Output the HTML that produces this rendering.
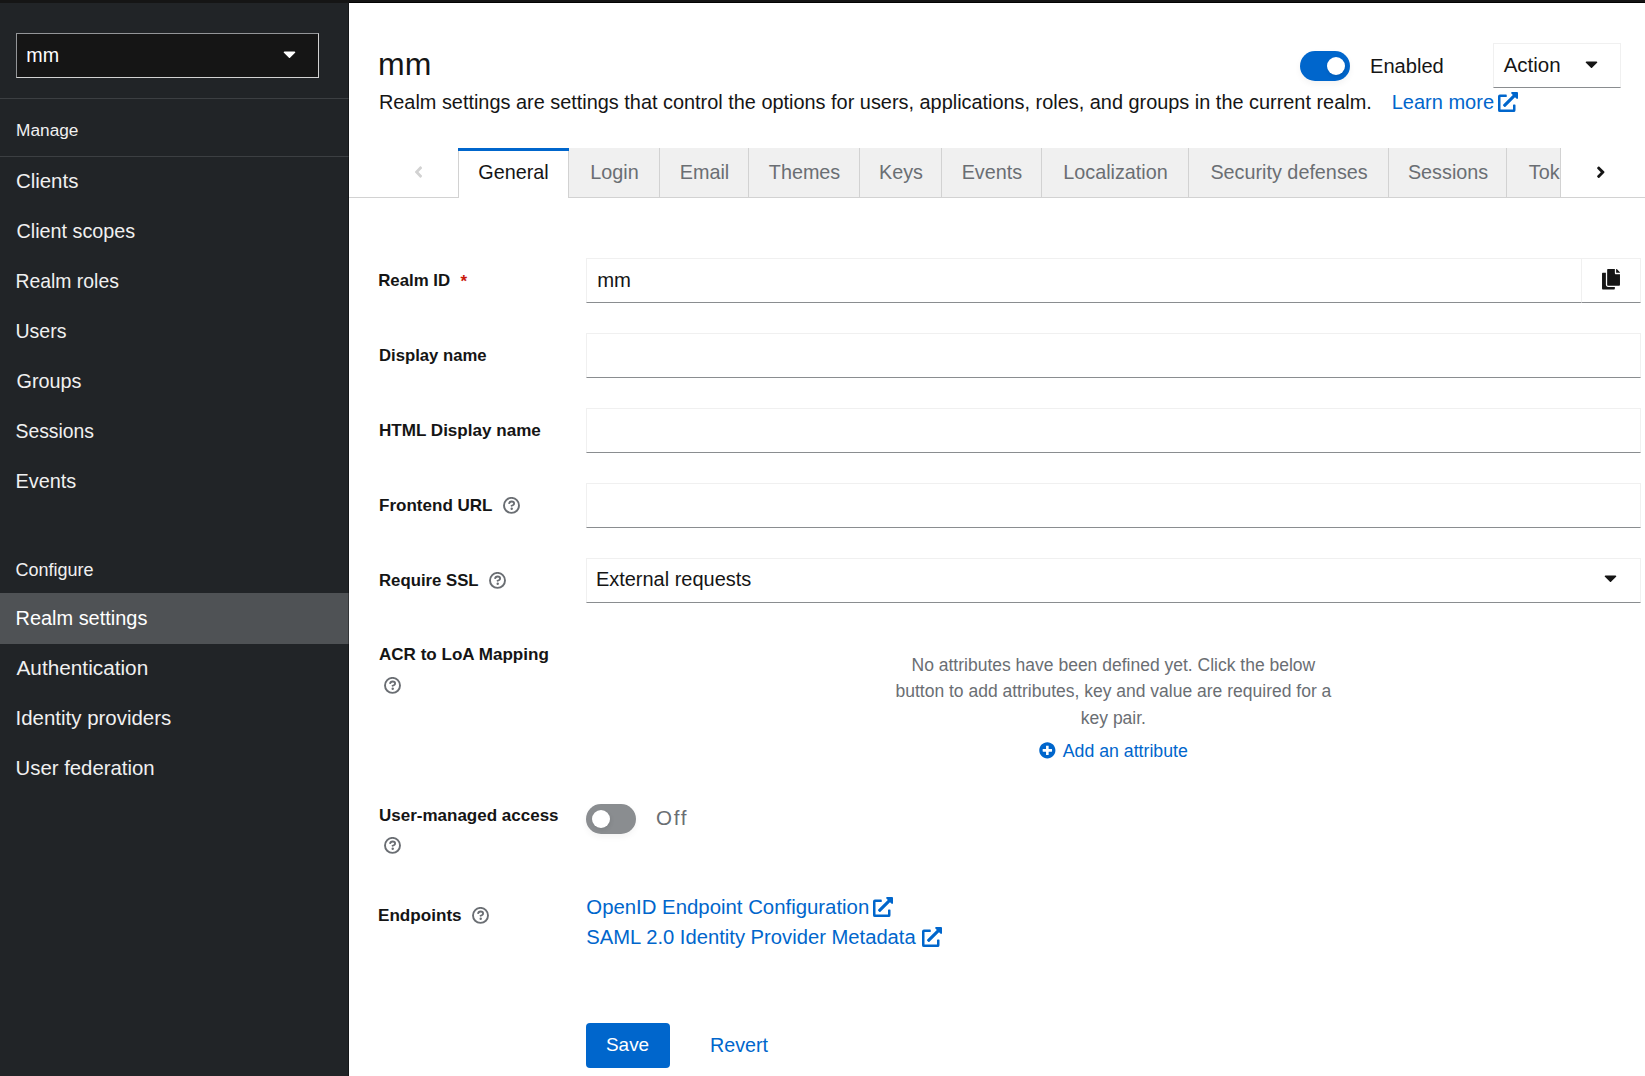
<!DOCTYPE html>
<html><head><meta charset="utf-8"><style>
html,body{margin:0;padding:0;width:1645px;height:1076px;overflow:hidden;background:#fff;}
body{position:relative;font-family:"Liberation Sans",sans-serif;}
.t{position:absolute;white-space:pre;}
.r{position:absolute;}
</style></head><body>
<div class="r" style="left:0px;top:0px;width:349px;height:1076px;background:#212427"></div>
<div class="r" style="left:16px;top:33px;width:303px;height:45px;background:#151515;border:1px solid #d2d2d2;border-top-color:#939598;border-left-color:#939598;box-sizing:border-box"></div>
<div class="t" style="left:26.30px;top:45.52px;font-size:19.7px;line-height:19.7px;color:#fff;font-weight:400;">mm</div>
<svg class="r" style="left:282.5px;top:44px;width:13px;height:20px" viewBox="0 0 320 512" fill="#fff"><path d="M31.3 192h257.3c17.8 0 26.7 21.5 14.1 34.1L174.1 354.8c-7.8 7.8-20.5 7.8-28.3 0L17.2 226.1C4.6 213.5 13.5 192 31.3 192z"/></svg>
<div class="r" style="left:0px;top:98px;width:349px;height:1px;background:#3c3f42"></div>
<div class="t" style="left:16.10px;top:122.49px;font-size:17.26px;line-height:17.26px;color:#f0f0f0;font-weight:400;">Manage</div>
<div class="r" style="left:0px;top:156px;width:349px;height:1px;background:#3c3f42"></div>
<div class="r" style="left:0px;top:593px;width:349px;height:51px;background:#4f5255"></div>
<div class="t" style="left:15.90px;top:170.67px;font-size:20.47px;line-height:20.47px;color:#f0f0f0;font-weight:400;">Clients</div>
<div class="t" style="left:16.50px;top:222.26px;font-size:19.77px;line-height:19.77px;color:#f0f0f0;font-weight:400;">Client scopes</div>
<div class="t" style="left:15.50px;top:271.59px;font-size:19.39px;line-height:19.39px;color:#f0f0f0;font-weight:400;">Realm roles</div>
<div class="t" style="left:15.50px;top:322.49px;font-size:19.5px;line-height:19.5px;color:#f0f0f0;font-weight:400;">Users</div>
<div class="t" style="left:16.50px;top:372.23px;font-size:19.81px;line-height:19.81px;color:#f0f0f0;font-weight:400;">Groups</div>
<div class="t" style="left:15.50px;top:421.61px;font-size:19.36px;line-height:19.36px;color:#f0f0f0;font-weight:400;">Sessions</div>
<div class="t" style="left:15.50px;top:472.18px;font-size:19.87px;line-height:19.87px;color:#f0f0f0;font-weight:400;">Events</div>
<div class="t" style="left:15.40px;top:560.95px;font-size:18.01px;line-height:18.01px;color:#f0f0f0;font-weight:400;">Configure</div>
<div class="t" style="left:15.50px;top:609.12px;font-size:19.94px;line-height:19.94px;color:#fff;font-weight:400;">Realm settings</div>
<div class="t" style="left:16.50px;top:658.40px;font-size:20.79px;line-height:20.79px;color:#f0f0f0;font-weight:400;">Authentication</div>
<div class="t" style="left:15.50px;top:707.69px;font-size:20.45px;line-height:20.45px;color:#f0f0f0;font-weight:400;">Identity providers</div>
<div class="t" style="left:15.50px;top:757.75px;font-size:20.38px;line-height:20.38px;color:#f0f0f0;font-weight:400;">User federation</div>
<div class="r" style="left:348px;top:0px;width:1px;height:1076px;background:rgba(0,0,0,0.35)"></div>
<div class="r" style="left:0px;top:0px;width:1645px;height:3px;background:#151515"></div>
<div class="r" style="left:349px;top:2px;width:1296px;height:1px;background:#030303"></div>
<div class="t" style="left:378.00px;top:47.91px;font-size:32.0px;line-height:32.0px;color:#151515;font-weight:400;">mm</div>
<div class="t" style="left:378.90px;top:93.15px;font-size:19.9px;line-height:19.9px;color:#151515;font-weight:400;">Realm settings are settings that control the options for users, applications, roles, and groups in the current realm.</div>
<div class="t" style="left:1391.70px;top:91.85px;font-size:20.02px;line-height:20.02px;color:#0066cc;font-weight:400;">Learn more</div>
<div class="t" style="left:1370.00px;top:55.97px;font-size:20.12px;line-height:20.12px;color:#151515;font-weight:400;">Enabled</div>
<div class="t" style="left:1503.70px;top:54.66px;font-size:20.49px;line-height:20.49px;color:#151515;font-weight:400;">Action</div>
<svg class="r" style="left:1498px;top:91.8px;width:20px;height:20px" viewBox="0 0 512 512" fill="#0066cc"><path d="M432,320H400a16,16,0,0,0-16,16V448H64V128H208a16,16,0,0,0,16-16V80a16,16,0,0,0-16-16H48A48,48,0,0,0,0,112V464a48,48,0,0,0,48,48H400a48,48,0,0,0,48-48V336A16,16,0,0,0,432,320ZM488,0h-128c-21.37,0-32.05,25.91-17,41l35.73,35.73L135,320.37a24,24,0,0,0,0,34L157.67,377a24,24,0,0,0,34,0L435.28,133.32,471,169c15,15,41,4.5,41-17V24A24,24,0,0,0,488,0Z"/></svg>
<div class="r" style="left:1300px;top:51px;width:50px;height:30px;background:#0066cc;border-radius:15px;box-shadow:0 3px 6px rgba(0,0,0,0.05)"></div>
<div class="r" style="left:1326.8px;top:57px;width:18.0px;height:18px;background:#fff;border-radius:50%;box-shadow:1px 2px 4px rgba(0,0,0,0.12)"></div>
<div class="r" style="left:1493px;top:43px;width:128px;height:45px;border:1px solid #f0f0f0;border-bottom-color:#8a8d90;box-sizing:border-box"></div>
<svg class="r" style="left:1584.6px;top:54px;width:13px;height:20px" viewBox="0 0 320 512" fill="#151515"><path d="M31.3 192h257.3c17.8 0 26.7 21.5 14.1 34.1L174.1 354.8c-7.8 7.8-20.5 7.8-28.3 0L17.2 226.1C4.6 213.5 13.5 192 31.3 192z"/></svg>
<div class="r" style="left:349px;top:197px;width:1296px;height:1px;background:#d2d2d2"></div>
<div class="r" style="left:458px;top:148px;width:1103px;height:50px;overflow:hidden">
<div class="r" style="left:0.0px;top:0;width:111.0px;height:50px;background:#fff;border-left:1px solid #d2d2d2;border-right:1px solid #d2d2d2;box-sizing:border-box"></div>
<div class="r" style="left:0.0px;top:0;width:111.0px;height:3px;background:#0066cc"></div>
<div class="t" style="left:0.0px;width:111.0px;text-align:center;top:15.44px;font-size:19.8px;line-height:19.8px;color:#151515">General</div>
<div class="r" style="left:111.0px;top:0;width:91.1px;height:49px;background:#f0f0f0;border-right:1px solid #d2d2d2;box-sizing:border-box"></div>
<div class="t" style="left:111.0px;width:91.1px;text-align:center;top:15.44px;font-size:19.8px;line-height:19.8px;color:#6a6e73">Login</div>
<div class="r" style="left:202.1px;top:0;width:88.8px;height:49px;background:#f0f0f0;border-right:1px solid #d2d2d2;box-sizing:border-box"></div>
<div class="t" style="left:202.1px;width:88.8px;text-align:center;top:15.44px;font-size:19.8px;line-height:19.8px;color:#6a6e73">Email</div>
<div class="r" style="left:290.9px;top:0;width:111.3px;height:49px;background:#f0f0f0;border-right:1px solid #d2d2d2;box-sizing:border-box"></div>
<div class="t" style="left:290.9px;width:111.3px;text-align:center;top:15.44px;font-size:19.8px;line-height:19.8px;color:#6a6e73">Themes</div>
<div class="r" style="left:402.2px;top:0;width:81.6px;height:49px;background:#f0f0f0;border-right:1px solid #d2d2d2;box-sizing:border-box"></div>
<div class="t" style="left:402.2px;width:81.6px;text-align:center;top:15.44px;font-size:19.8px;line-height:19.8px;color:#6a6e73">Keys</div>
<div class="r" style="left:483.8px;top:0;width:100.2px;height:49px;background:#f0f0f0;border-right:1px solid #d2d2d2;box-sizing:border-box"></div>
<div class="t" style="left:483.8px;width:100.2px;text-align:center;top:15.44px;font-size:19.8px;line-height:19.8px;color:#6a6e73">Events</div>
<div class="r" style="left:584.0px;top:0;width:147.0px;height:49px;background:#f0f0f0;border-right:1px solid #d2d2d2;box-sizing:border-box"></div>
<div class="t" style="left:584.0px;width:147.0px;text-align:center;top:15.44px;font-size:19.8px;line-height:19.8px;color:#6a6e73">Localization</div>
<div class="r" style="left:731.0px;top:0;width:200.1px;height:49px;background:#f0f0f0;border-right:1px solid #d2d2d2;box-sizing:border-box"></div>
<div class="t" style="left:731.0px;width:200.1px;text-align:center;top:15.44px;font-size:19.8px;line-height:19.8px;color:#6a6e73">Security defenses</div>
<div class="r" style="left:931.1px;top:0;width:117.9px;height:49px;background:#f0f0f0;border-right:1px solid #d2d2d2;box-sizing:border-box"></div>
<div class="t" style="left:931.1px;width:117.9px;text-align:center;top:15.44px;font-size:19.8px;line-height:19.8px;color:#6a6e73">Sessions</div>
<div class="r" style="left:1049.0px;top:0;width:153.0px;height:49px;background:#f0f0f0;border-right:1px solid #d2d2d2;box-sizing:border-box"></div>
<div class="t" style="left:1070.8px;top:15.44px;font-size:19.8px;line-height:19.8px;color:#6a6e73">Tokens</div>
</div>
<div class="r" style="left:1560px;top:148px;width:1px;height:49px;background:#d2d2d2"></div>
<svg class="r" style="left:413px;top:163px;width:11px;height:18px" viewBox="0 0 256 512" fill="#d2d2d2"><path d="M31.7 239l136-136c9.4-9.4 24.6-9.4 33.9 0l22.6 22.6c9.4 9.4 9.4 24.6 0 33.9L127.9 256l96.4 96.4c9.4 9.4 9.4 24.6 0 33.9L201.7 409c-9.4 9.4-24.6 9.4-33.9 0l-136-136c-9.5-9.4-9.5-24.6-.1-34z"/></svg>
<svg class="r" style="left:1595.3px;top:162.8px;width:11.6px;height:18.4px" viewBox="0 0 256 512" fill="#151515"><path d="M224.3 273l-136 136c-9.4 9.4-24.6 9.4-33.9 0l-22.6-22.6c-9.4-9.4-9.4-24.6 0-33.9l96.4-96.4-96.4-96.4c-9.4-9.4-9.4-24.6 0-33.9L54.3 103c9.4-9.4 24.6-9.4 33.9 0l136 136c9.5 9.4 9.5 24.6.1 34z"/></svg>
<div class="t" style="left:378.20px;top:272.54px;font-size:16.84px;line-height:16.84px;color:#151515;font-weight:700;">Realm ID</div>
<div class="t" style="left:379.00px;top:347.85px;font-size:16.71px;line-height:16.71px;color:#151515;font-weight:700;">Display name</div>
<div class="t" style="left:379.00px;top:422.15px;font-size:17.07px;line-height:17.07px;color:#151515;font-weight:700;">HTML Display name</div>
<div class="t" style="left:379.00px;top:496.58px;font-size:17.04px;line-height:17.04px;color:#151515;font-weight:700;">Frontend URL</div>
<div class="t" style="left:379.00px;top:572.81px;font-size:16.76px;line-height:16.76px;color:#151515;font-weight:700;">Require SSL</div>
<div class="t" style="left:379.00px;top:646.36px;font-size:17.06px;line-height:17.06px;color:#151515;font-weight:700;">ACR to LoA Mapping</div>
<div class="t" style="left:379.00px;top:806.80px;font-size:17.01px;line-height:17.01px;color:#151515;font-weight:700;">User-managed access</div>
<div class="t" style="left:378.00px;top:907.10px;font-size:17.13px;line-height:17.13px;color:#151515;font-weight:700;">Endpoints</div>
<div class="t" style="left:460.50px;top:273.21px;font-size:17px;line-height:17px;color:#c9190b;font-weight:700;">*</div>
<svg class="r" style="left:503.00px;top:496.50px;width:17px;height:17px" viewBox="0 0 17 17"><circle cx="8.5" cy="8.4" r="7.5" fill="none" stroke="#6a6e73" stroke-width="1.9"/><path d="M6.0 6.9C6.2 5.3 7.3 4.5 8.6 4.5C10.1 4.5 11.1 5.3 11.1 6.4C11.1 7.8 9.7 8.5 7.8 9.0" fill="none" stroke="#6a6e73" stroke-width="1.8"/><circle cx="8.7" cy="11.7" r="1.2" fill="#6a6e73"/></svg>
<svg class="r" style="left:489.00px;top:571.70px;width:17px;height:17px" viewBox="0 0 17 17"><circle cx="8.5" cy="8.4" r="7.5" fill="none" stroke="#6a6e73" stroke-width="1.9"/><path d="M6.0 6.9C6.2 5.3 7.3 4.5 8.6 4.5C10.1 4.5 11.1 5.3 11.1 6.4C11.1 7.8 9.7 8.5 7.8 9.0" fill="none" stroke="#6a6e73" stroke-width="1.8"/><circle cx="8.7" cy="11.7" r="1.2" fill="#6a6e73"/></svg>
<svg class="r" style="left:384.00px;top:676.70px;width:17px;height:17px" viewBox="0 0 17 17"><circle cx="8.5" cy="8.4" r="7.5" fill="none" stroke="#6a6e73" stroke-width="1.9"/><path d="M6.0 6.9C6.2 5.3 7.3 4.5 8.6 4.5C10.1 4.5 11.1 5.3 11.1 6.4C11.1 7.8 9.7 8.5 7.8 9.0" fill="none" stroke="#6a6e73" stroke-width="1.8"/><circle cx="8.7" cy="11.7" r="1.2" fill="#6a6e73"/></svg>
<svg class="r" style="left:384.00px;top:836.70px;width:17px;height:17px" viewBox="0 0 17 17"><circle cx="8.5" cy="8.4" r="7.5" fill="none" stroke="#6a6e73" stroke-width="1.9"/><path d="M6.0 6.9C6.2 5.3 7.3 4.5 8.6 4.5C10.1 4.5 11.1 5.3 11.1 6.4C11.1 7.8 9.7 8.5 7.8 9.0" fill="none" stroke="#6a6e73" stroke-width="1.8"/><circle cx="8.7" cy="11.7" r="1.2" fill="#6a6e73"/></svg>
<svg class="r" style="left:472.20px;top:906.70px;width:17px;height:17px" viewBox="0 0 17 17"><circle cx="8.5" cy="8.4" r="7.5" fill="none" stroke="#6a6e73" stroke-width="1.9"/><path d="M6.0 6.9C6.2 5.3 7.3 4.5 8.6 4.5C10.1 4.5 11.1 5.3 11.1 6.4C11.1 7.8 9.7 8.5 7.8 9.0" fill="none" stroke="#6a6e73" stroke-width="1.8"/><circle cx="8.7" cy="11.7" r="1.2" fill="#6a6e73"/></svg>
<div class="r" style="left:586px;top:258px;width:996px;height:45px;border:1px solid #f0f0f0;border-bottom-color:#8a8d90;box-sizing:border-box"></div>
<div class="r" style="left:586px;top:333px;width:1055px;height:45px;border:1px solid #f0f0f0;border-bottom-color:#8a8d90;box-sizing:border-box"></div>
<div class="r" style="left:586px;top:408px;width:1055px;height:45px;border:1px solid #f0f0f0;border-bottom-color:#8a8d90;box-sizing:border-box"></div>
<div class="r" style="left:586px;top:483px;width:1055px;height:45px;border:1px solid #f0f0f0;border-bottom-color:#8a8d90;box-sizing:border-box"></div>
<div class="r" style="left:586px;top:558px;width:1055px;height:45px;border:1px solid #f0f0f0;border-bottom-color:#8a8d90;box-sizing:border-box"></div>
<div class="r" style="left:1581px;top:258px;width:60px;height:45px;border:1px solid #f0f0f0;border-bottom-color:#8a8d90;box-sizing:border-box"></div>
<svg class="r" style="left:1602px;top:269px;width:18px;height:20.5px" viewBox="0 0 448 512" fill="#151515"><path d="M320 448v40c0 13.255-10.745 24-24 24H24c-13.255 0-24-10.745-24-24V120c0-13.255 10.745-24 24-24h72v296c0 30.879 25.121 56 56 56h168zm0-344V0H152c-13.255 0-24 10.745-24 24v368c0 13.255 10.745 24 24 24h272c13.255 0 24-10.745 24-24V128H344c-13.2 0-24-10.8-24-24zm120.971-31.029L375.029 7.029A24 24 0 0 0 358.059 0H352v96h96v-6.059a24 24 0 0 0-7.029-16.97z"/></svg>
<div class="t" style="left:597.20px;top:269.81px;font-size:20.31px;line-height:20.31px;color:#151515;font-weight:400;">mm</div>
<div class="t" style="left:595.90px;top:569.49px;font-size:19.98px;line-height:19.98px;color:#151515;font-weight:400;">External requests</div>
<svg class="r" style="left:1604.3px;top:567.8px;width:13px;height:20px" viewBox="0 0 320 512" fill="#151515"><path d="M31.3 192h257.3c17.8 0 26.7 21.5 14.1 34.1L174.1 354.8c-7.8 7.8-20.5 7.8-28.3 0L17.2 226.1C4.6 213.5 13.5 192 31.3 192z"/></svg>
<div class="t" style="left:813.4px;width:600px;text-align:center;top:657.19px;font-size:17.5px;line-height:17.5px;color:#6a6e73">No attributes have been defined yet. Click the below</div>
<div class="t" style="left:813.4px;width:600px;text-align:center;top:682.99px;font-size:17.5px;line-height:17.5px;color:#6a6e73">button to add attributes, key and value are required for a</div>
<div class="t" style="left:813.4px;width:600px;text-align:center;top:709.79px;font-size:17.5px;line-height:17.5px;color:#6a6e73">key pair.</div>
<svg class="r" style="left:1039.3px;top:742.1px;width:16.7px;height:16.7px" viewBox="0 0 512 512" fill="#0066cc"><path d="M256 8C119 8 8 119 8 256s111 248 248 248 248-111 248-248S393 8 256 8zm144 276c0 6.6-5.4 12-12 12h-92v92c0 6.6-5.4 12-12 12h-56c-6.6 0-12-5.4-12-12v-92h-92c-6.6 0-12-5.4-12-12v-56c0-6.6 5.4-12 12-12h92v-92c0-6.6 5.4-12 12-12h56c6.6 0 12 5.4 12 12v92h92c6.6 0 12 5.4 12 12v56z"/></svg>
<div class="t" style="left:1062.80px;top:742.80px;font-size:17.72px;line-height:17.72px;color:#0066cc;font-weight:400;">Add an attribute</div>
<div class="r" style="left:586px;top:804px;width:50px;height:30px;background:#8a8d90;border-radius:15px;box-shadow:0 3px 6px rgba(0,0,0,0.05)"></div>
<div class="r" style="left:591.6px;top:809.8px;width:18.199999999999932px;height:18.200000000000045px;background:#fff;border-radius:50%;box-shadow:1px 2px 4px rgba(0,0,0,0.08)"></div>
<div class="t" style="left:656.00px;top:807.76px;font-size:20.6px;line-height:20.6px;color:#6a6e73;font-weight:400;letter-spacing:1.7px;">Off</div>
<div class="t" style="left:586.30px;top:897.17px;font-size:20.36px;line-height:20.36px;color:#0066cc;font-weight:400;">OpenID Endpoint Configuration</div>
<svg class="r" style="left:872.8px;top:896.8px;width:20px;height:20px" viewBox="0 0 512 512" fill="#0066cc"><path d="M432,320H400a16,16,0,0,0-16,16V448H64V128H208a16,16,0,0,0,16-16V80a16,16,0,0,0-16-16H48A48,48,0,0,0,0,112V464a48,48,0,0,0,48,48H400a48,48,0,0,0,48-48V336A16,16,0,0,0,432,320ZM488,0h-128c-21.37,0-32.05,25.91-17,41l35.73,35.73L135,320.37a24,24,0,0,0,0,34L157.67,377a24,24,0,0,0,34,0L435.28,133.32,471,169c15,15,41,4.5,41-17V24A24,24,0,0,0,488,0Z"/></svg>
<div class="t" style="left:586.30px;top:926.78px;font-size:20.22px;line-height:20.22px;color:#0066cc;font-weight:400;">SAML 2.0 Identity Provider Metadata</div>
<svg class="r" style="left:921.8px;top:926.8px;width:20px;height:20px" viewBox="0 0 512 512" fill="#0066cc"><path d="M432,320H400a16,16,0,0,0-16,16V448H64V128H208a16,16,0,0,0,16-16V80a16,16,0,0,0-16-16H48A48,48,0,0,0,0,112V464a48,48,0,0,0,48,48H400a48,48,0,0,0,48-48V336A16,16,0,0,0,432,320ZM488,0h-128c-21.37,0-32.05,25.91-17,41l35.73,35.73L135,320.37a24,24,0,0,0,0,34L157.67,377a24,24,0,0,0,34,0L435.28,133.32,471,169c15,15,41,4.5,41-17V24A24,24,0,0,0,488,0Z"/></svg>
<div class="r" style="left:586px;top:1023px;width:84px;height:45px;background:#0066cc;border-radius:4px"></div>
<div class="t" style="left:606.00px;top:1036.18px;font-size:18.92px;line-height:18.92px;color:#fff;font-weight:400;">Save</div>
<div class="t" style="left:710.10px;top:1036.12px;font-size:19.71px;line-height:19.71px;color:#0066cc;font-weight:400;">Revert</div>
</body></html>
